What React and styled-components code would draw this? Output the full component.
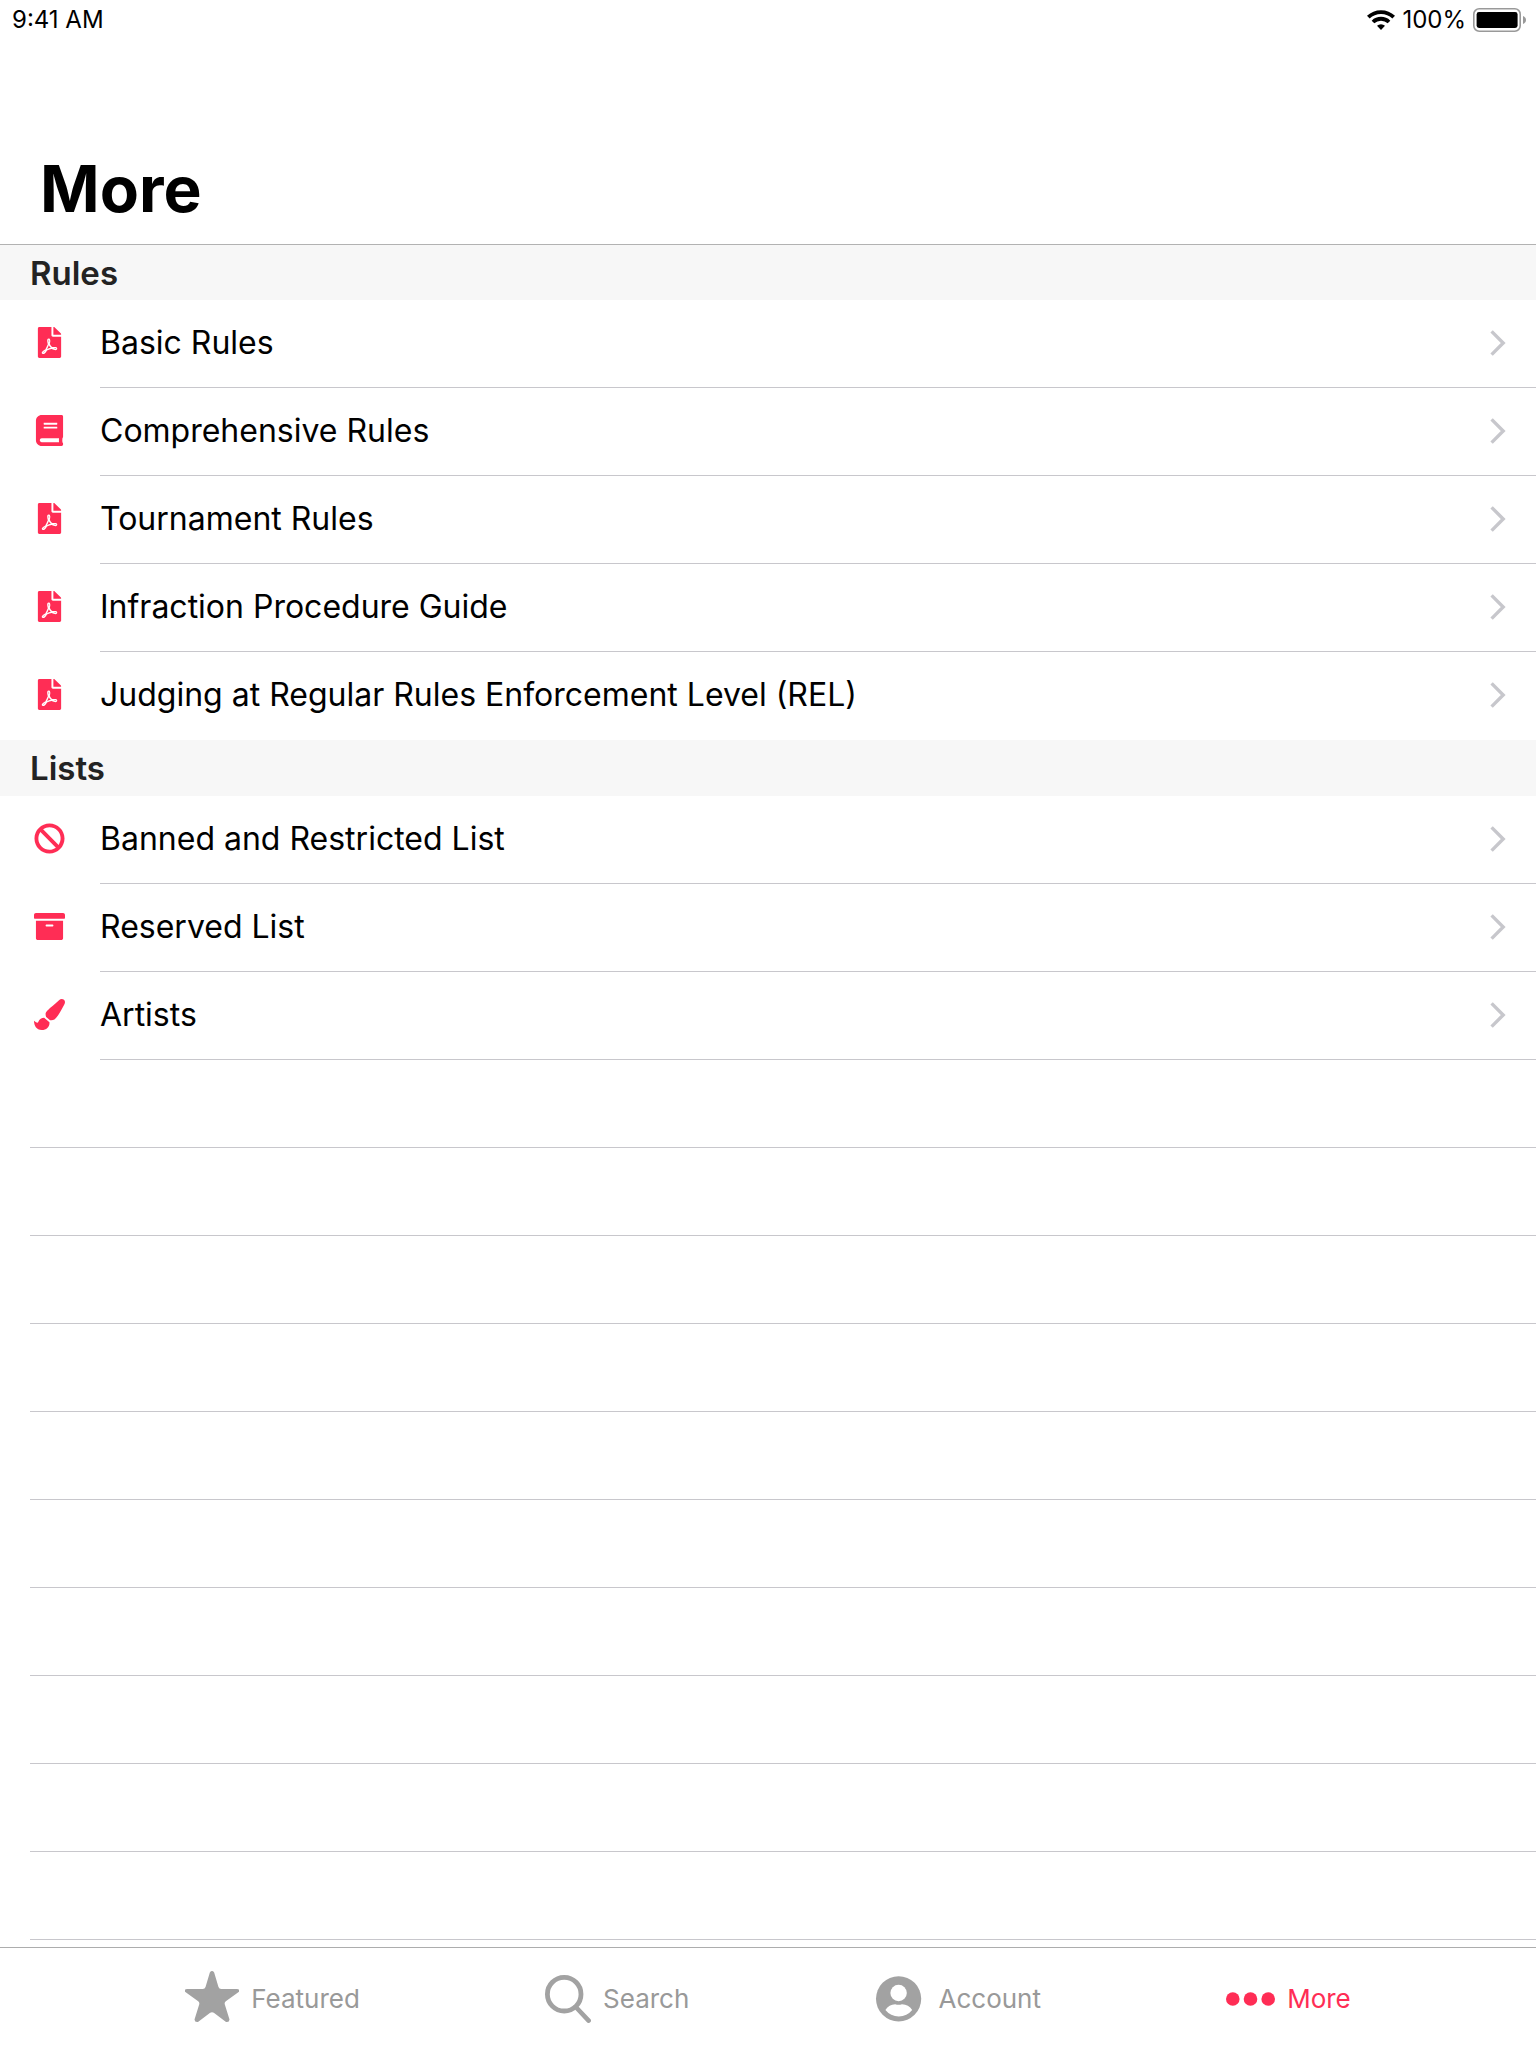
import React from "react";
import styled, { createGlobalStyle } from "styled-components";
import { FaFilePdf, FaBook, FaBan, FaArchive, FaPaintBrush } from "react-icons/fa";

const GlobalStyle = createGlobalStyle`
  * { box-sizing: border-box; }
  body {
    margin: 0;
    background: #fff;
    color: #000;
    font-family: Inter, "Liberation Sans", sans-serif;
  }
`;

const Screen = styled.div`
  display: flex;
  flex-direction: column;
  min-height: 100vh;
`;

const StatusBar = styled.div`
  display: flex;
  justify-content: space-between;
  align-items: center;
  height: 40px;
  padding: 0 10px 0 12px;
  font-size: 24px;
  line-height: 40px;
`;

const StatusGroup = styled.div`
  display: flex;
  align-items: center;
  gap: 7px;
`;

const Header = styled.header`
  border-bottom: 1px solid #b2b2b2;
  padding: 109px 40px 15px;
`;

const Title = styled.h1`
  margin: 0;
  font-size: 64px;
  line-height: 80px;
  font-weight: 700;
`;

const Main = styled.main`
  display: flex;
  flex-direction: column;
  flex: 1;
`;

const SectionTitle = styled.h2`
  margin: 0;
  padding: 0 30px;
  height: ${(p) => (p.$first ? "55px" : "56px")};
  line-height: 56px;
  font-size: 33px;
  font-weight: 600;
  color: #232323;
  background: #f7f7f7;
`;

const List = styled.ul`
  margin: 0;
  padding: 0;
  list-style: none;
`;

const RowLink = styled.a`
  display: flex;
  height: 88px;
  color: inherit;
  text-decoration: none;
`;

const IconCell = styled.span`
  display: flex;
  align-items: center;
  flex: none;
  width: 100px;
  padding: 0 0 3px 34px;
  color: #ff2d55;
  font-size: 31px;
`;

const RowBody = styled.span`
  display: flex;
  align-items: center;
  justify-content: space-between;
  flex: 1;
  min-width: 0;
  padding: 0 30px 1px 0;
  font-size: 32px;
  line-height: 40px;
  border-bottom: 1px solid ${(p) => (p.$plain ? "transparent" : "#c8c7cc")};
`;

const EmptyRows = styled.div`
  flex: 1;
  margin-left: 30px;
  background: repeating-linear-gradient(
    to bottom,
    transparent 0 87px,
    #c8c7cc 87px 88px
  );
`;

const TabBar = styled.nav`
  display: flex;
  justify-content: space-evenly;
  height: 101px;
  padding-top: 2px;
  border-top: 1px solid #adadad;
`;

const Tab = styled.button`
  display: flex;
  align-items: center;
  gap: 12px;
  padding: 0;
  border: 0;
  background: none;
  font: inherit;
  font-size: 26px;
  line-height: 32px;
  color: ${(p) => (p.$active ? "#ff2d55" : "#999")};

  svg {
    color: ${(p) => (p.$active ? "#ff2d55" : "#a2a2a2")};
  }
`;

const Wifi = () => (
  <svg width="28" height="20" viewBox="0 0 28 20" fill="none" stroke="currentColor" strokeWidth="3.8" aria-hidden="true">
    <path d="M1.3 7.2a18.2 18.2 0 0 1 25.4 0" />
    <path d="M6 12a11.5 11.5 0 0 1 16 0" />
    <path d="M14 20l-4-4.3a6 6 0 0 1 8 0z" fill="currentColor" stroke="none" />
  </svg>
);

const Battery = () => (
  <svg width="53" height="24" viewBox="0 0 53 24" aria-hidden="true">
    <rect x="0.8" y="0.8" width="46.4" height="22.4" rx="5.4" fill="none" stroke="#999" strokeWidth="1.6" />
    <rect x="3.6" y="4" width="41" height="16" rx="2.4" />
    <path d="M50 8c4 1.6 4 6.4 0 8z" fill="#999" />
  </svg>
);

const Chevron = () => (
  <svg width="16" height="26" viewBox="0 0 16 26" fill="none" stroke="#c7c7cc" strokeWidth="3.4" aria-hidden="true">
    <path d="M1.6 1.4 13.2 13 1.6 24.6" />
  </svg>
);

const StarIcon = () => (
  <svg width="54" height="56" viewBox="0 0 50 56" preserveAspectRatio="none" fill="currentColor" aria-hidden="true">
    <path d="M23 1.4Q25-1.2 27 1.4L31 16Q31.6 18 33.5 18H48Q50.8 18 50 20.8L37.8 30.2Q36.4 31.5 36.8 33.2L41.2 48.5Q41 51.6 38 51L27 41.9Q25 40.4 23 41.9L12 51Q9 51.6 8.8 48.5L13.2 33.2Q13.6 31.5 12.2 30.2L0 20.8Q-.8 18 2 18H16.5Q18.4 18 19 16Z" />
  </svg>
);

const SearchIcon = () => (
  <svg width="46" height="48" viewBox="0 0 46 48" fill="none" stroke="currentColor" aria-hidden="true">
    <circle cx="19.2" cy="19.2" r="16.8" strokeWidth="4.8" />
    <path d="M30.8 32 43.6 45.6" strokeWidth="4.6" strokeLinecap="round" />
  </svg>
);

const AccountIcon = () => (
  <svg width="52" height="46" viewBox="0 0 52 46" aria-hidden="true">
    <circle cx="23.6" cy="22.8" r="22.6" fill="currentColor" />
    <circle cx="23.6" cy="17" r="8.2" fill="#fff" />
    <path d="M10.4 34Q14 28.4 20.2 28.3Q23.6 29.3 27 28.3Q33.6 28.4 37.2 34Q32 40.4 23.8 40.4T10.4 34Z" fill="#fff" />
  </svg>
);

const MoreIcon = () => (
  <svg width="49" height="14" viewBox="0 0 49 14" fill="currentColor" aria-hidden="true">
    <circle cx="6.8" cy="7" r="6.8" />
    <circle cx="24.5" cy="7" r="6.8" />
    <circle cx="42.2" cy="7" r="6.8" />
  </svg>
);

const sections = [
  {
    title: "Rules",
    rows: [
      ["Basic Rules", FaFilePdf],
      ["Comprehensive Rules", FaBook],
      ["Tournament Rules", FaFilePdf],
      ["Infraction Procedure Guide", FaFilePdf],
      ["Judging at Regular Rules Enforcement Level (REL)", FaFilePdf],
    ],
  },
  {
    title: "Lists",
    rows: [
      ["Banned and Restricted List", FaBan],
      ["Reserved List", FaArchive],
      ["Artists", FaPaintBrush],
    ],
  },
];

const tabs = [
  ["Featured", StarIcon],
  ["Search", SearchIcon],
  ["Account", AccountIcon],
  ["More", MoreIcon],
];

export default function App() {
  return (
    <Screen>
      <GlobalStyle />
      <StatusBar>
        <span>9:41 AM</span>
        <StatusGroup>
          <Wifi />
          <span>100%</span>
          <Battery />
        </StatusGroup>
      </StatusBar>
      <Header>
        <Title>More</Title>
      </Header>
      <Main>
        {sections.map(({ title, rows }, s) => (
          <section key={title}>
            <SectionTitle $first={s === 0}>{title}</SectionTitle>
            <List>
              {rows.map(([label, Icon], i) => (
                <li key={label}>
                  <RowLink href="#">
                    <IconCell>
                      <Icon aria-hidden="true" />
                    </IconCell>
                    <RowBody $plain={i === rows.length - 1 && s < sections.length - 1}>
                      {label}
                      <Chevron />
                    </RowBody>
                  </RowLink>
                </li>
              ))}
            </List>
          </section>
        ))}
        <EmptyRows />
      </Main>
      <TabBar>
        {tabs.map(([label, Icon]) => (
          <Tab key={label} type="button" $active={label === "More"}>
            <Icon />
            {label}
          </Tab>
        ))}
      </TabBar>
    </Screen>
  );
}
